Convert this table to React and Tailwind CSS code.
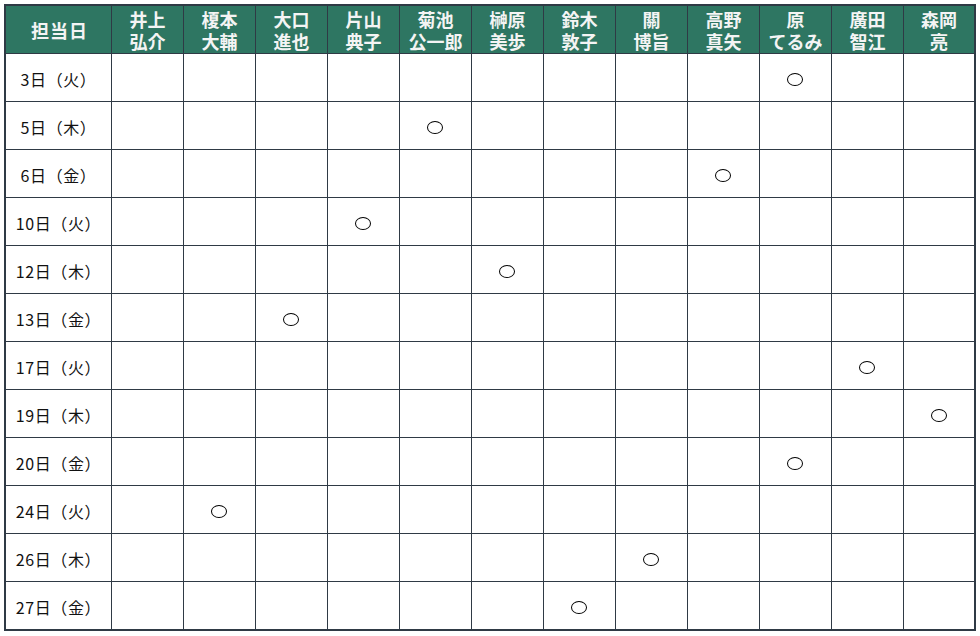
import React from "react";

const names = [
  ["井上", "弘介"],
  ["榎本", "大輔"],
  ["大口", "進也"],
  ["片山", "典子"],
  ["菊池", "公一郎"],
  ["榊原", "美歩"],
  ["鈴木", "敦子"],
  ["關", "博旨"],
  ["高野", "真矢"],
  ["原", "てるみ"],
  ["廣田", "智江"],
  ["森岡", "亮"],
];

const rows = [
  ["3日（火）", 10],
  ["5日（木）", 5],
  ["6日（金）", 9],
  ["10日（火）", 4],
  ["12日（木）", 6],
  ["13日（金）", 3],
  ["17日（火）", 11],
  ["19日（木）", 12],
  ["20日（金）", 10],
  ["24日（火）", 2],
  ["26日（木）", 8],
  ["27日（金）", 7],
];

export default function App() {
  return (
    <div className="w-[980px] h-[636px] bg-white pt-[4px] pl-[4px]" style={{ fontFamily: '"Noto Sans CJK JP", sans-serif' }}>
      <div className="w-[972px] h-[627px] border-2 border-[#2f3a45] bg-[#2f3a45]">
        <div className="grid grid-cols-[105px_repeat(11,71px)_70px] grid-rows-[47px_repeat(12,47px)] gap-px">
          <div className="bg-[#2e7662] text-[#f4f4f4] font-bold text-[18px] leading-[22px] flex items-center justify-center pl-[2px] tracking-[1px]">
            担当日
          </div>
          {names.map((n, i) => (
            <div
              key={i}
              className="bg-[#2e7662] text-[#f4f4f4] font-bold text-[18px] leading-[22px] flex flex-col items-center justify-center"
            >
              <span className="leading-[22px]">{n[0]}</span>
              <span className="leading-[22px]">{n[1]}</span>
            </div>
          ))}
          {rows.map(([label, col], r) => (
            <React.Fragment key={r}>
              <div className="bg-white text-[#111] text-[16px] leading-[20px] tracking-[0.6px] flex items-center justify-center pt-[2px]">
                {label}
              </div>
              {names.map((_, c) => (
                <div key={c} className="bg-white flex items-center justify-center pt-[4px] pr-[1px]">
                  {c + 1 === col ? (
                    <div className="w-[16px] h-[13px] rounded-[50%] border border-black" />
                  ) : null}
                </div>
              ))}
            </React.Fragment>
          ))}
        </div>
      </div>
    </div>
  );
}
